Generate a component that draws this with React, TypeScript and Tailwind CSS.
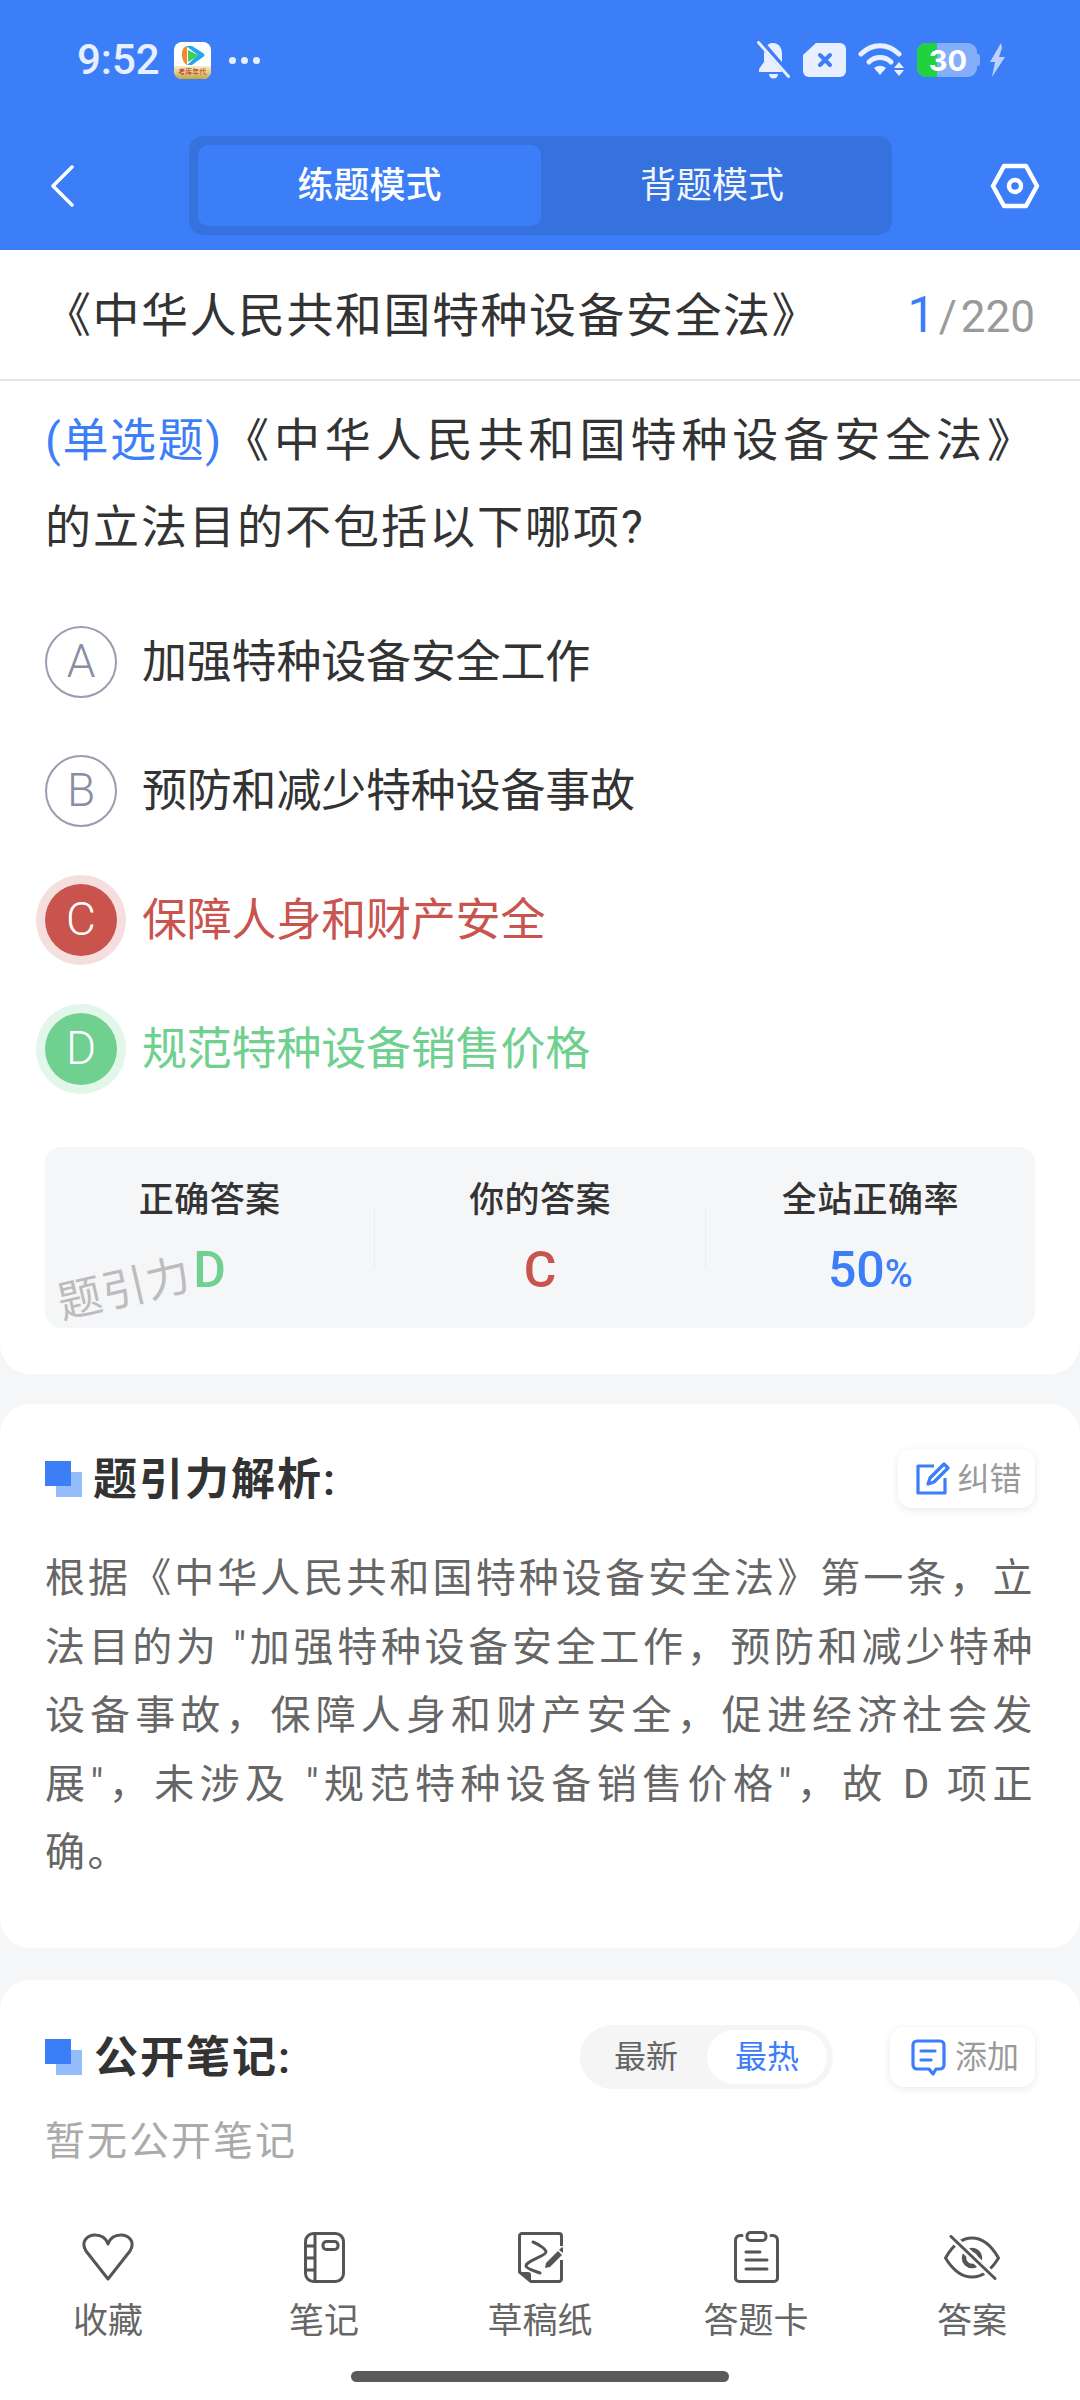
const font = 'font-["Roboto","Noto_Sans_CJK_SC",sans-serif]';

const analysis =
  '根据《中华人民共和国特种设备安全法》第一条\uFF0C立法目的为 "加强特种设备安全工作\uFF0C预防和减少特种设备事故\uFF0C保障人身和财产安全\uFF0C促进经济社会发展"\uFF0C未涉及 "规范特种设备销售价格"\uFF0C故 D 项正确。';

function SectionMark() {
  return (
    <div className="relative w-[37px] h-[36px] shrink-0">
      <div className="absolute left-[11px] top-[11px] w-[26px] h-[25px] bg-[#93bdfb]" />
      <div className="absolute left-0 top-0 w-[26px] h-[25px] bg-[#3b7ef8]" />
    </div>
  );
}

function HeartIcon() {
  return (
    <svg width="54" height="48" viewBox="0 0 54 48" fill="none" stroke="#555" strokeWidth="3" strokeLinejoin="round">
      <path d="M27 46L5 18C-1 8 7 2 14 2c6 0 11 3 13 9 2-6 7-9 13-9 7 0 15 6 9 16z" />
    </svg>
  );
}

function NoteIcon() {
  return (
    <svg width="41" height="51" viewBox="0 0 41 51" fill="none" stroke="#555" strokeWidth="3">
      <rect x="1.5" y="1.5" width="38" height="48" rx="8" />
      <path d="M11 2v47M2 14h9M2 26h9M2 38h9" />
      <rect x="19" y="9.500" width="15" height="8" rx="3.500" />
    </svg>
  );
}

function DraftIcon() {
  return (
    <svg width="45" height="51" viewBox="0 0 45 51" fill="none" stroke="#555" strokeWidth="3" strokeLinejoin="round">
      <path d="M43.500 14V4a2.500 2.500 0 0 0-2.500-2.500H4A2.500 2.500 0 0 0 1.500 4v36L13 49.500h28a2.500 2.500 0 0 0 2.500-2.500V28" />
      <path d="M1 40h9a3 3 0 0 1 3 3v7z" fill="#555" stroke="none" />
      <path d="M15 10c5 2 13 7 13 10 0 4-20 9-20 14 0 2 8 5 14 7" strokeLinecap="round" />
      <path d="M27 36l1-5 12-12 4 4-12 12z" fill="#555" stroke="none" />
      <path d="M41 18l3-3 1 1v5z" fill="#555" stroke="none" />
    </svg>
  );
}

function CardIcon() {
  return (
    <svg width="45" height="52" viewBox="0 0 45 52" fill="none" stroke="#555" strokeWidth="3" strokeLinecap="round">
      <path d="M8 4.500H6A4.500 4.500 0 0 0 1.500 9v38A3.500 3.500 0 0 0 5 50.500h35a3.500 3.500 0 0 0 3.500-3.500V9A4.500 4.500 0 0 0 39 4.500h-2" />
      <rect x="13" y="1.500" width="19" height="8" rx="3.500" />
      <path d="M12 21h14M12 29h21M12 38h21" />
    </svg>
  );
}

function EyeOffIcon() {
  return (
    <svg width="56" height="45" viewBox="0 0 56 45" fill="none" stroke="#555" strokeWidth="3" strokeLinecap="round">
      <path d="M1.500 23C10 8 19 3 28 3s18 5 26.500 20C46 37 37 42 28 42S10 37 1.500 23z" strokeLinejoin="round" />
      <circle cx="28" cy="23" r="8" strokeWidth="4.500" />
      <path d="M7 1.500l44 42" stroke="#fff" strokeWidth="8" strokeLinecap="butt" />
      <path d="M7 1.500l44 42" />
    </svg>
  );
}

function StatusIcons() {
  return (
    <div className="flex items-center">
      {/* muted bell */}
      <svg width="33" height="38" viewBox="0 0 33 38" className="mr-[13px]">
        <path d="M16 2c-6 0-9 5-9 12v7l-5 7v3h23z" fill="#e8f0ff" />
        <path d="M16 2c6 0 9 5 9 11v9L10 5c2-2 4-3 6-3z" fill="#e8f0ff" />
        <path d="M12 33h9a4.500 4.500 0 0 1-9 0z" fill="#e8f0ff" />
        <path d="M3 0l30 35" stroke="#3b7ef8" strokeWidth="6" />
        <path d="M1.500 1.500l30 34" stroke="#e8f0ff" strokeWidth="3" strokeLinecap="round" />
      </svg>
      {/* x box */}
      <svg width="43" height="34" viewBox="0 0 43 34" className="mr-[12px]">
        <path d="M13 0h24a6 6 0 0 1 6 6v22a6 6 0 0 1-6 6H6a6 6 0 0 1-6-6V12z" fill="#e8f0ff" />
        <path d="M17 12l10 10M27 12L17 22" stroke="#3b7ef8" strokeWidth="4" strokeLinecap="round" />
      </svg>
      {/* wifi */}
      <svg width="47" height="34" viewBox="0 0 47 34" className="mr-[12px]">
        <path d="M3 11c11-11 27-11 38 0" stroke="#e8f0ff" strokeWidth="5" fill="none" strokeLinecap="round" />
        <path d="M11 19c6-6 16-6 22 0" stroke="#e8f0ff" strokeWidth="5" fill="none" strokeLinecap="round" />
        <path d="M16 25c4-3 8-3 12 0l-6 7z" fill="#e8f0ff" />
        <path d="M41 19l5 6H36zM36 27h10l-5 6z" fill="#e8f0ff" />
      </svg>
      {/* battery */}
      <div className="relative w-[60px] h-[34px] rounded-[9px] bg-[#84aefa] overflow-hidden">
        <div className="absolute left-0 top-0 bottom-0 w-[20px] bg-[#22d13f]" />
        <div className="relative h-full flex items-center justify-center text-[29px] font-bold text-white leading-none pl-[2px] font-['Inter',sans-serif]">30</div>
      </div>
      <div className="w-[3px] h-[12px] bg-[#84aefa] rounded-r-[2px] mr-[10px]" />
      <svg width="15" height="34" viewBox="0 0 15 34">
        <path d="M11 0L0 19h5l-3 15 13-20H9l3-9z" fill="#bcd2fc" />
      </svg>
    </div>
  );
}

function AppIcon() {
  return (
    <div className="relative ml-[14px] w-[37px] h-[37px] rounded-[8px] bg-white overflow-hidden">
      <svg width="37" height="28" viewBox="0 0 37 28">
        <path d="M13 4C9 5 8 8 8 13s2 8 5 10z" fill="#f08a2c" />
        <path d="M12 4h6l11 7c2 1.500 2 3 0 4l-11 8h-5l11-10z" fill="#22a7f0" />
        <path d="M14 8l11 5.500L14 20z" fill="#3ecf5a" />
      </svg>
      <div className="absolute left-0 right-0 bottom-0 h-[13px] bg-gradient-to-b from-[#f6efc8] to-[#c9a632] flex items-center justify-center text-[7px] leading-none text-[#b3261e] whitespace-nowrap">考库年代</div>
    </div>
  );
}

export default function App() {
  return (
    <div className={`${font} w-[1080px] h-[2400px] overflow-hidden flex flex-col bg-[#f5f6f8] text-[#333]`}>
      {/* Header */}
      <header className="h-[250px] shrink-0 bg-[#3b7ef8] flex flex-col">
        <div className="h-[120px] flex items-center justify-between pl-[77px] pr-[75px]">
          <div className="flex items-center">
            <span className="text-[42px] font-medium text-[#e8f0ff] leading-none">9:52</span>
            <AppIcon />
            <div className="ml-[18px] flex gap-[5px]">
              <span className="w-[7px] h-[7px] rounded-full bg-[#e8f0ff]" />
              <span className="w-[7px] h-[7px] rounded-full bg-[#e8f0ff]" />
              <span className="w-[7px] h-[7px] rounded-full bg-[#e8f0ff]" />
            </div>
          </div>
          <StatusIcons />
        </div>
        <div className="flex items-center h-[99px] mt-[16px] pl-[50px]">
          <svg width="24" height="42" viewBox="0 0 24 42" fill="none" stroke="#fff" strokeWidth="3.500" strokeLinecap="round" strokeLinejoin="round">
            <path d="M22 2L3 21l19 19" />
          </svg>
          <div className="ml-[115px] w-[703px] h-[99px] rounded-[14px] bg-[#3672dd] p-[9px] flex">
            <div className="w-[343px] h-[81px] rounded-[10px] bg-[#3b7ef8] flex items-center justify-center text-white text-[36px] font-medium">练题模式</div>
            <div className="flex-1 flex items-center justify-center text-white/95 text-[36px]">背题模式</div>
          </div>
          <svg className="ml-[98px]" width="50" height="46" viewBox="0 0 50 46" fill="none" stroke="#fff" strokeWidth="4.500" strokeLinejoin="round">
            <path d="M14 3h22l11 20-11 20H14L3 23z" />
            <circle cx="25" cy="23" r="6" />
          </svg>
        </div>
      </header>

      {/* Question card */}
      <section className="bg-white rounded-b-[30px] shrink-0 h-[1124px] flex flex-col">
        <div className="h-[131px] shrink-0 border-b-2 border-[#e5e5e5] flex items-center justify-between pl-[44px] pr-[45px]">
          <h1 className="text-[47px] tracking-[1.500px] leading-none font-normal pt-[2px]">《中华人民共和国特种设备安全法》</h1>
          <div className="flex items-baseline text-[#9a9a9a]">
            <span className="text-[50px] text-[#3b7ef8] leading-none">1</span>
            <span className="text-[44px] leading-none ml-[3px]">/</span>
            <span className="text-[44px] leading-none ml-[4px]">220</span>
          </div>
        </div>
        <div className="px-[45px] pt-[16px] text-[46px] leading-[87px] tracking-[2px]">
          <p className="[text-align-last:justify]">
            <span className="text-[#3b7ef8] tracking-[-1.300px]">(单选题)</span>《中华人民共和国特种设备安全法》
          </p>
          <p>的立法目的不包括以下哪项?</p>
        </div>
        <div className="mt-[26px] pl-[45px] flex flex-col">
          <Option letter="A" text="加强特种设备安全工作" />
          <Option letter="B" text="预防和减少特种设备事故" />
          <Option letter="C" text="保障人身和财产安全" tone="wrong" />
          <Option letter="D" text="规范特种设备销售价格" tone="right" />
        </div>
        <div className="relative mx-[45px] mt-[34px] h-[181px] rounded-[16px] bg-[#f5f6f8] flex overflow-hidden">
          <Stat label="正确答案" value="D" valueClass="text-[#6fd08f]" />
          <div className="w-px h-[60px] mt-[60px] bg-[#e9ebee]" />
          <Stat label="你的答案" value="C" valueClass="text-[#c9534d]" />
          <div className="w-px h-[60px] mt-[60px] bg-[#e9ebee]" />
          <Stat
            label="全站正确率"
            value={<>50<span className="text-[38px]">%</span></>}
            valueClass="text-[#3b7ef8]"
          />
          <span className="absolute left-[12px] top-[120px] text-[44px] leading-none text-[#bcbcbc] -rotate-[13deg] tracking-[1px]">题引力</span>
        </div>
      </section>

      {/* Analysis card */}
      <section className="mt-[30px] bg-white rounded-[30px] shrink-0 h-[544px] px-[45px] pt-[45px]">
        <div className="flex items-center justify-between h-[59px]">
          <div className="flex items-center">
            <SectionMark />
            <h2 className="ml-[11px] pt-[2px] text-[44px] font-semibold tracking-[2px] leading-none">题引力解析:</h2>
          </div>
          <button className="w-[137px] h-[59px] pl-[5px] rounded-[14px] bg-white shadow-[0_2px_8px_rgba(0,0,0,0.09)] flex items-center justify-center text-[#9a9a9a] text-[32px]">
            <svg className="mr-[7px]" width="34" height="33" viewBox="0 0 34 33" fill="none" stroke="#3b7ef8" strokeWidth="3.200" strokeLinejoin="round">
              <path d="M18 4H2v27h27V16" />
              <path d="M28 2l4 4-14 14-6 2 2-6z" />
            </svg>
            纠错
          </button>
        </div>
        <p className="mt-[37px] text-[40px] tracking-[2.500px] leading-[68.500px] text-[#666] text-justify">{analysis}</p>
      </section>

      {/* Public notes card */}
      <section className="mt-[32px] bg-white rounded-t-[30px] shrink-0 h-[210px] px-[45px] pt-[45px]">
        <div className="flex items-center h-[64px]">
          <SectionMark />
          <h2 className="ml-[12px] pt-[2px] text-[44px] font-semibold tracking-[2px] leading-none">公开笔记:</h2>
          <div className="ml-auto w-[253px] h-[64px] rounded-full bg-[#f5f5f5] p-[5px] flex items-center text-[32px]">
            <div className="w-[122px] text-center text-[#666]">最新</div>
            <div className="w-[120px] h-[54px] rounded-full bg-white text-[#3b7ef8] flex items-center justify-center">最热</div>
          </div>
          <button className="ml-[57px] w-[145px] h-[60px] pl-[5px] rounded-[14px] bg-white shadow-[0_2px_8px_rgba(0,0,0,0.09)] flex items-center justify-center text-[#9a9a9a] text-[32px]">
            <svg className="mr-[9px]" width="35" height="37" viewBox="0 0 35 37" fill="none" stroke="#3b7ef8" strokeWidth="3.200" strokeLinejoin="round">
              <path d="M6 2h23a4 4 0 0 1 4 4v20a4 4 0 0 1-4 4h-4l-3 5-4-5H6a4 4 0 0 1-4-4V6a4 4 0 0 1 4-4z" />
              <path d="M10 12h14M10 21h10" strokeLinecap="round" />
            </svg>
            添加
          </button>
        </div>
        <p className="mt-[28px] text-[40px] tracking-[2px] leading-[50px] text-[#aaa]">暂无公开笔记</p>
      </section>

      {/* Bottom nav */}
      <nav className="relative flex-1 bg-white grid grid-cols-5 pt-[37px]">
        <NavItem label="收藏"><HeartIcon /></NavItem>
        <NavItem label="笔记"><NoteIcon /></NavItem>
        <NavItem label="草稿纸"><DraftIcon /></NavItem>
        <NavItem label="答题卡"><CardIcon /></NavItem>
        <NavItem label="答案"><EyeOffIcon /></NavItem>
        <div className="absolute left-[351px] top-[181px] w-[378px] h-[11px] rounded-full bg-[#5a5a5a]" />
      </nav>
    </div>
  );
}

function Option({ letter, text, tone }: { letter: string; text: string; tone?: 'wrong' | 'right' }) {
  const circle =
    tone === 'wrong'
      ? 'bg-[#c9534d] text-white shadow-[0_0_0_9px_#f5dfde]'
      : tone === 'right'
        ? 'bg-[#6fd08f] text-white shadow-[0_0_0_9px_#e2f6e9]'
        : 'border-2 border-[#9a9db0] text-[#8a8da3]';
  const label = tone === 'wrong' ? 'text-[#c9534d]' : tone === 'right' ? 'text-[#6fd08f]' : 'text-[#333]';
  return (
    <div className="h-[129px] flex items-center">
      <div className={`w-[72px] h-[72px] rounded-full flex items-center justify-center text-[46px] font-light ${circle}`}>{letter}</div>
      <span className={`ml-[25px] pt-[2px] text-[45px] tracking-[-0.200px] ${label}`}>{text}</span>
    </div>
  );
}

function Stat({ label, value, valueClass }: { label: string; value: React.ReactNode; valueClass: string }) {
  return (
    <div className="flex-1 flex flex-col items-center pt-[32px]">
      <div className="text-[35px] font-medium leading-[44px] tracking-[0.400px]">{label}</div>
      <div className={`mt-[21px] text-[50px] font-medium leading-[52px] ${valueClass}`}>{value}</div>
    </div>
  );
}

function NavItem({ label, children }: { label: string; children: React.ReactNode }) {
  return (
    <div className="flex flex-col items-center">
      <div className="h-[60px] flex items-center justify-center">{children}</div>
      <div className="mt-[13px] text-[35px] leading-[44px] text-[#666]">{label}</div>
    </div>
  );
}
